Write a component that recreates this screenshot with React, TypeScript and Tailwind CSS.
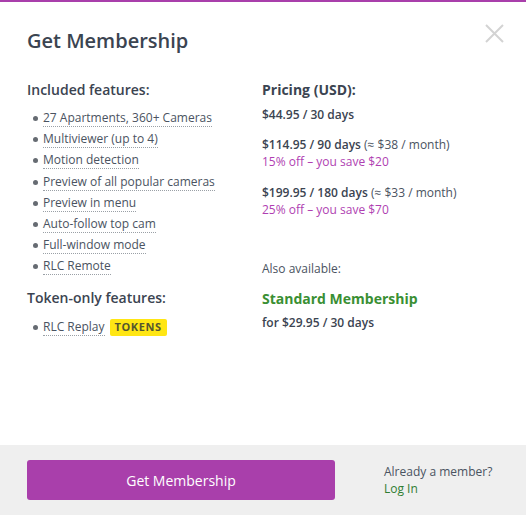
import React from "react";

const features = [
  "27 Apartments, 360+ Cameras",
  "Multiviewer (up to 4)",
  "Motion detection",
  "Preview of all popular cameras",
  "Preview in menu",
  "Auto-follow top cam",
  "Full-window mode",
  "RLC Remote",
];

function Item({ children, extra }: { children: React.ReactNode; extra?: React.ReactNode }) {
  return (
    <li className="flex items-center h-[21.2px] pl-[6px]">
      <span className="w-[5px] h-[5px] rounded-full bg-[#666b72] mr-[5px] shrink-0" />
      <span className="leading-[16px] border-b border-dotted border-[#9aa0a6] text-[12px] text-[#4a5361]">
        {children}
      </span>
      {extra}
    </li>
  );
}

export default function App() {
  return (
    <div
      className="w-[526px] h-[515px] flex flex-col bg-white border-t-2 border-[#a93fab]"
      style={{ fontFamily: '"Open Sans", "Noto Sans", sans-serif' }}
    >
      <div className="flex-1 relative px-[27px] pt-[25px]">
        <button className="absolute right-[22px] top-[22px] w-[19px] h-[19px]" aria-label="Close">
          <svg viewBox="0 0 19 19" width="19" height="19">
            <path d="M1 1 L18 18 M18 1 L1 18" stroke="#d3d3d3" strokeWidth="2" />
          </svg>
        </button>
        <h1 className="text-[20px] leading-[28px] font-semibold text-[#3b4451]">Get Membership</h1>

        <div className="grid grid-cols-[235px_1fr] mt-[25px]">
          <div>
            <h2 className="text-[14px] leading-[20px] font-semibold text-[#3b4451]">Included features:</h2>
            <ul className="mt-[8px]">
              {features.map((f) => (
                <Item key={f}>{f}</Item>
              ))}
            </ul>
            <h2 className="mt-[10px] text-[14px] leading-[20px] font-semibold text-[#3b4451]">
              Token-only features:
            </h2>
            <ul className="mt-[9px]">
              <Item
                extra={
                  <span className="ml-[5px] h-[17px] px-[5px] flex items-center bg-[#ffe614] rounded-[2px] text-[11px] font-bold tracking-[0.6px] text-[#55552f]">
                    TOKENS
                  </span>
                }
              >
                RLC Replay
              </Item>
            </ul>
          </div>

          <div>
            <h2 className="text-[14px] leading-[20px] font-bold text-[#3b4451]">Pricing (USD):</h2>
            <div className="mt-[6px] text-[12px] leading-[17px] text-[#3b4451]">
              <p className="font-semibold">$44.95 / 30 days</p>
              <div className="mt-[13px]">
                <p>
                  <span className="font-semibold">$114.95 / 90 days</span>{" "}
                  <span className="text-[#4a5361]">(≈ $38 / month)</span>
                </p>
                <p className="text-[#b03fb2]">15% off – you save $20</p>
              </div>
              <div className="mt-[14px]">
                <p>
                  <span className="font-semibold">$199.95 / 180 days</span>{" "}
                  <span className="text-[#4a5361]">(≈ $33 / month)</span>
                </p>
                <p className="text-[#b03fb2]">25% off – you save $70</p>
              </div>
            </div>
            <p className="mt-[42px] text-[12px] leading-[18px] text-[#4a5361]">Also available:</p>
            <p className="mt-[11px] text-[14px] leading-[20px] font-bold text-[#3a8f33]">Standard Membership</p>
            <p className="mt-[5px] text-[12px] leading-[18px] font-semibold text-[#3b4451]">for $29.95 / 30 days</p>
          </div>
        </div>
      </div>

      <div className="h-[70px] bg-[#efefef] flex items-center px-[27px]">
        <button className="w-[308px] shrink-0 h-[40px] rounded-[3px] bg-[#a93fab] text-white text-[14px]">
          Get Membership
        </button>
        <div className="ml-[49px] text-[12px] leading-[17px] whitespace-nowrap">
          <p className="text-[#4a5361]">Already a member?</p>
          <p className="text-[#2f7d32]">Log In</p>
        </div>
      </div>
    </div>
  );
}
